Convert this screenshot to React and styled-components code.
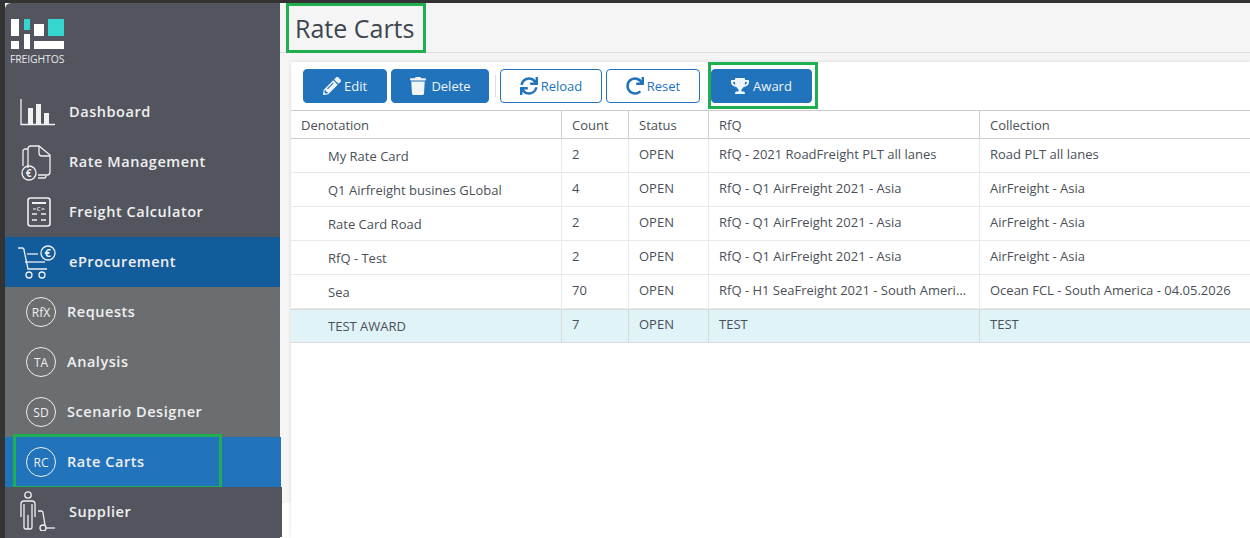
import React from 'react';
import styled, { createGlobalStyle } from 'styled-components';
import { FaPencilAlt, FaTrash, FaSync, FaRedo, FaTrophy } from 'react-icons/fa';

const GlobalStyle = createGlobalStyle`
    html, body {
        margin: 0;
        padding: 0;
        background: #fff;
    }
    * {
        box-sizing: border-box;
    }
    body {
        font-family: "Open Sans", "Liberation Sans", sans-serif;
    }
`;

const Page = styled.div`
    display: flex;
    height: 538px;
    overflow: hidden;
    border-top: 3px solid #333;
    border-left: 5px solid #333;
`;

const Sidebar = styled.aside`
    position: relative;
    z-index: 1;
    width: 275px;
    flex: none;
    background: #52555e;
    border-top-left-radius: 6px;
`;

const LogoBlock = styled.div`
    height: 84px;
    padding: 16px 0 0 5px;
    color: #e8e8e8;
    span {
        display: block;
        font-size: 10.4px;
        line-height: 11px;
        margin-top: 4px;
        letter-spacing: -0.1px;
    }
    svg {
        display: block;
    }
`;

const NavItem = styled.a`
    position: relative;
    display: flex;
    align-items: center;
    height: 50px;
    margin-right: ${(p) => p.$overhang || 0}px;
    color: #f0f0f0;
    font-size: 14.5px;
    font-weight: 560;
    letter-spacing: 0.55px;
    background: ${(p) => p.$bg || '#52555e'};
`;

const NavLabel = styled.span`
    margin-bottom: 2px;
`;

const IconSlot = styled.div`
    width: 64px;
    flex: none;
    display: flex;
    align-items: center;
    justify-content: flex-start;
    svg {
        display: block;
    }
`;

const Badge = styled.div`
    width: 30px;
    height: 30px;
    flex: none;
    margin: 0 11px 0 21px;
    border: 1px solid #f0f0f0;
    border-radius: 50%;
    display: flex;
    align-items: center;
    justify-content: center;
    font-size: 12px;
    font-weight: 400;
    letter-spacing: 0;
`;

const NavHighlight = styled.div`
    position: absolute;
    left: 8px;
    top: -3px;
    width: 209px;
    height: 55px;
    border: 3px solid #1fae50;
    pointer-events: none;
`;

const Main = styled.main`
    flex: 1;
    min-width: 0;
    background: linear-gradient(#f5f5f5 500px, #fff 500px);
    display: flex;
    flex-direction: column;
`;

const TitleBar = styled.header`
    height: 50px;
    flex: none;
    padding-left: 6px;
    border-bottom: 1px solid #ddd;
`;

const Title = styled.h1`
    display: inline-block;
    width: 140px;
    height: 50px;
    margin: 0;
    padding-left: 6px;
    border: 3px solid #1fae50;
    color: #3d4650;
    font-size: 25px;
    font-weight: 500;
    line-height: 45px;
`;

const Card = styled.section`
    flex: 1;
    margin: 9px 0 0 11px;
    background: #fff;
    box-shadow: 0 0 4px rgba(0, 0, 0, 0.12);
`;

const Toolbar = styled.div`
    display: flex;
    align-items: center;
    height: 49px;
    padding: 0 0 1px 12px;
    border-bottom: 1px solid #ccc;
`;

const Button = styled.button`
    display: flex;
    align-items: center;
    justify-content: center;
    gap: ${(p) => p.$gap || 3}px;
    height: 34px;
    width: ${(p) => p.$width}px;
    margin-right: 4px;
    padding: 0;
    border: 1px solid #2173bb;
    border-radius: 4px;
    background: ${(p) => (p.$outline ? '#fff' : '#2173bb')};
    color: ${(p) => (p.$outline ? '#2173bb' : '#f0f5fa')};
    font-family: inherit;
    font-size: 13px;
    svg {
        font-size: 18px;
    }
`;

const Divider = styled.div`
    width: 1px;
    height: 22px;
    margin: 0 4px 0 2px;
    background: #ddd;
`;

const AwardFrame = styled.div`
    margin-left: 4px;
    width: 110px;
    height: 47px;
    display: flex;
    align-items: center;
    justify-content: flex-start;
    border: 3px solid #1fae50;
    ${Button} {
        margin: 0;
    }
`;

const Table = styled.table`
    width: 100%;
    table-layout: fixed;
    border-collapse: separate;
    border-spacing: 0;
    font-size: 13px;
    color: #4a5059;
`;

const Th = styled.th`
    height: 28px;
    padding: 0 0 0 10px;
    font-weight: 400;
    text-align: left;
    border-bottom: 1px solid #ccc;
    border-right: 1px solid #ccc;
    &:last-child {
        border-right: 0;
    }
`;

const Td = styled.td`
    height: 34px;
    padding: 0 10px 3px 10px;
    white-space: nowrap;
    overflow: hidden;
    text-overflow: ellipsis;
    border-bottom: 1px solid #e9e9e9;
    border-right: 1px solid #e9e9e9;
    &:last-child {
        border-right: 0;
    }
    tr.selected & {
        background: #e0f3f7;
        border-bottom-color: #d9d9d9;
        border-right-color: #d9d9d9;
        box-shadow: inset 0 1px 0 #d9d9d9;
    }
`;

const NameCell = styled(Td)`
    padding: 1px 0 0 37px;
`;

const rows = [
    ['My Rate Card', '2', 'OPEN', 'RfQ - 2021 RoadFreight PLT all lanes', 'Road PLT all lanes'],
    ['Q1 Airfreight busines GLobal', '4', 'OPEN', 'RfQ - Q1 AirFreight 2021 - Asia', 'AirFreight - Asia'],
    ['Rate Card Road', '2', 'OPEN', 'RfQ - Q1 AirFreight 2021 - Asia', 'AirFreight - Asia'],
    ['RfQ - Test', '2', 'OPEN', 'RfQ - Q1 AirFreight 2021 - Asia', 'AirFreight - Asia'],
    ['Sea', '70', 'OPEN', 'RfQ - H1 SeaFreight 2021 - South America - 04.05.2026', 'Ocean FCL - South America - 04.05.2026'],
    ['TEST AWARD', '7', 'OPEN', 'TEST', 'TEST'],
];

const stroke = { fill: 'none', stroke: '#f0f0f0', strokeWidth: 1.3 };

const Logo = () => (
    <svg width="54" height="31" viewBox="0 0 54 31">
        <rect x="1" y="0" width="8" height="17" fill="#fff" />
        <rect x="14" y="0" width="6" height="11" fill="#35d6d0" />
        <rect x="24" y="5" width="10" height="12" fill="#fff" />
        <rect x="38" y="0" width="16" height="17" fill="#35d6d0" />
        <rect x="1" y="22" width="8" height="8" fill="#fff" />
        <rect x="14" y="15" width="6" height="15" fill="#fff" />
        <rect x="24" y="22" width="30" height="8" fill="#fff" />
    </svg>
);

const ChartIcon = () => (
    <svg width="36" height="28" viewBox="0 0 36 28" style={{ marginLeft: 15 }}>
        <path d="M1 1V26.5H35" {...stroke} />
        <rect x="8" y="10" width="5" height="16" fill="#f0f0f0" />
        <rect x="16" y="6" width="5" height="20" fill="#f0f0f0" />
        <rect x="24" y="15" width="5" height="11" fill="#f0f0f0" />
    </svg>
);

const DocIcon = () => (
    <svg width="32" height="38" viewBox="0 0 32 38" style={{ marginLeft: 16 }}>
        <path d="M7 25V6C7 4 8 3 10 3H18L29 12V29C29 31 28 32 26 32H17" {...stroke} />
        <path d="M18 3V10C18 12 19 13 21 13H29" {...stroke} />
        <path d="M7 6H4C3 6 2 7 2 8V23" {...stroke} />
        <path d="M17 35H23C24 35 25 34 25 33" {...stroke} />
        <circle cx="8" cy="30" r="7" {...stroke} />
        <text x="8" y="33.5" fontSize="10" fontWeight="700" fill="#f0f0f0" textAnchor="middle">€</text>
    </svg>
);

const CalcIcon = () => (
    <svg width="24" height="30" viewBox="0 0 24 30" style={{ marginLeft: 22 }}>
        <rect x="1" y="1" width="22" height="28" rx="2.5" {...stroke} strokeWidth="1.6" />
        <path d="M5 6H19" stroke="#f0f0f0" strokeWidth="2" />
        <text x="12" y="14" fontSize="6" fill="#f0f0f0" textAnchor="middle">=C=</text>
        <path d="M5 17H10M14 17H19M5 23H10M14 23H19" stroke="#f0f0f0" strokeWidth="1.6" />
    </svg>
);

const CartIcon = () => (
    <svg width="40" height="34" viewBox="0 0 40 34" style={{ marginLeft: 12 }}>
        <path d="M1 3H5C6 3 7 4 7 5L11 24H30" {...stroke} />
        <path d="M10 9H21" {...stroke} />
        <path d="M8 17L28 17" {...stroke} />
        <circle cx="12" cy="30" r="3" {...stroke} />
        <circle cx="25" cy="30" r="3" {...stroke} />
        <circle cx="31" cy="8" r="7" {...stroke} />
        <text x="31" y="12" fontSize="11" fontWeight="700" fill="#f0f0f0" textAnchor="middle">€</text>
    </svg>
);

const SupplierIcon = () => (
    <svg width="38" height="40" viewBox="0 0 38 40" style={{ marginLeft: 13, marginTop: -2 }}>
        <circle cx="10" cy="4" r="3.2" {...stroke} />
        <path d="M3 26V13C3 11 4 10 6 10H14C16 10 17 11 17 13V26" {...stroke} />
        <path d="M6 13V36C6 37 7 38 8 38H12C13 38 14 37 14 36V13M10 24V38" {...stroke} />
        <path d="M20 20H23C24 20 25 21 25 22L27 34" {...stroke} />
        <circle cx="25" cy="37" r="3" {...stroke} />
        <path d="M28 37H37" {...stroke} />
    </svg>
);

const App = () => {
    return (
        <>
            <GlobalStyle />
            <Page>
                <Sidebar>
                    <LogoBlock>
                        <Logo />
                        <span>FREIGHTOS</span>
                    </LogoBlock>
                    <NavItem><IconSlot><ChartIcon /></IconSlot><NavLabel>Dashboard</NavLabel></NavItem>
                    <NavItem><IconSlot><DocIcon /></IconSlot><NavLabel>Rate Management</NavLabel></NavItem>
                    <NavItem><IconSlot><CalcIcon /></IconSlot><NavLabel>Freight Calculator</NavLabel></NavItem>
                    <NavItem $bg="#125c9c"><IconSlot><CartIcon /></IconSlot><NavLabel>eProcurement</NavLabel></NavItem>
                    <NavItem $bg="#6b6e71"><Badge>RfX</Badge><NavLabel>Requests</NavLabel></NavItem>
                    <NavItem $bg="#6b6e71"><Badge>TA</Badge><NavLabel>Analysis</NavLabel></NavItem>
                    <NavItem $bg="#6b6e71"><Badge>SD</Badge><NavLabel>Scenario Designer</NavLabel></NavItem>
                    <NavItem $bg="#2173bb" $overhang={-1}>
                        <Badge>RC</Badge><NavLabel>Rate Carts</NavLabel>
                        <NavHighlight />
                    </NavItem>
                    <NavItem $overhang={-2}><IconSlot><SupplierIcon /></IconSlot><NavLabel>Supplier</NavLabel></NavItem>
                </Sidebar>
                <Main>
                    <TitleBar>
                        <Title>Rate Carts</Title>
                    </TitleBar>
                    <Card>
                        <Toolbar>
                            <Button $width={84}><FaPencilAlt />Edit</Button>
                            <Button $width={98} $gap={4}><FaTrash />Delete</Button>
                            <Divider />
                            <Button $width={102} $outline><FaSync />Reload</Button>
                            <Button $width={94} $outline><FaRedo />Reset</Button>
                            <AwardFrame>
                                <Button $width={101} $gap={4}><FaTrophy />Award</Button>
                            </AwardFrame>
                        </Toolbar>
                        <Table>
                            <colgroup>
                                <col style={{ width: 271 }} />
                                <col style={{ width: 67 }} />
                                <col style={{ width: 80 }} />
                                <col style={{ width: 271 }} />
                                <col />
                            </colgroup>
                            <thead>
                                <tr>
                                    <Th>Denotation</Th>
                                    <Th>Count</Th>
                                    <Th>Status</Th>
                                    <Th>RfQ</Th>
                                    <Th>Collection</Th>
                                </tr>
                            </thead>
                            <tbody>
                                {rows.map((row) => (
                                    <tr key={row[0]} className={row[0] === 'TEST AWARD' ? 'selected' : undefined}>
                                        <NameCell>{row[0]}</NameCell>
                                        <Td>{row[1]}</Td>
                                        <Td>{row[2]}</Td>
                                        <Td>{row[3]}</Td>
                                        <Td>{row[4]}</Td>
                                    </tr>
                                ))}
                            </tbody>
                        </Table>
                    </Card>
                </Main>
            </Page>
        </>
    );
};

export default App;
